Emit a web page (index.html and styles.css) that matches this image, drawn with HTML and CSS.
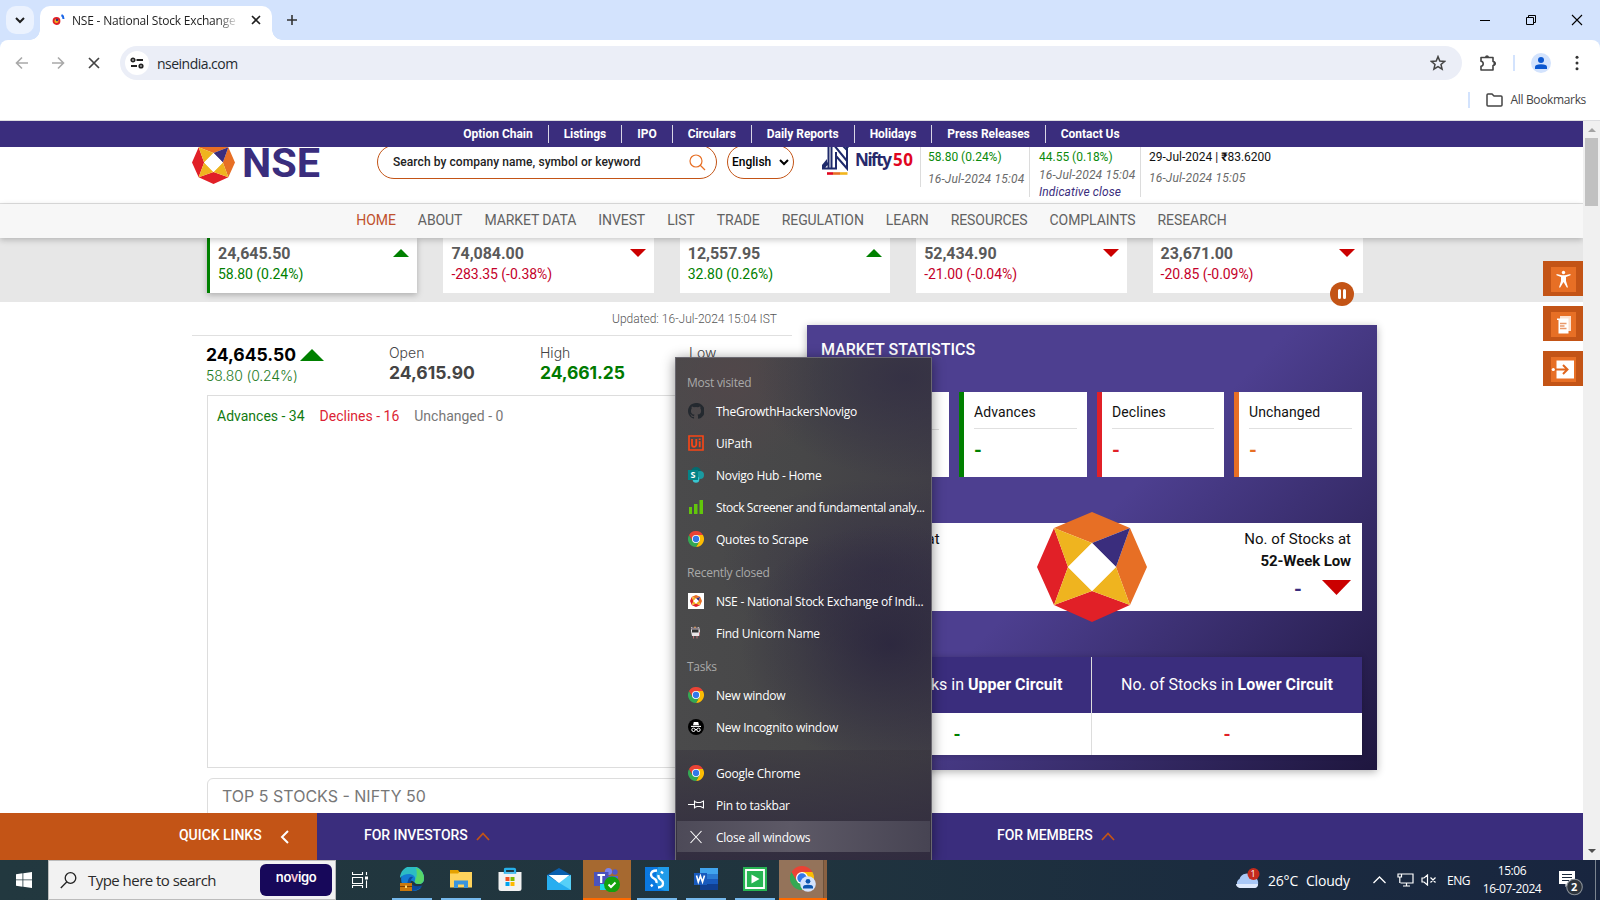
FILE: index.html
```html
<!DOCTYPE html>
<html lang="en">
<head>
<meta charset="utf-8">
<title>NSE - National Stock Exchange</title>
<link rel="stylesheet" href="styles.css">
</head>
<body>
<svg class="defs" width="0" height="0" aria-hidden="true">
  <symbol id="nse" viewBox="-55 -55 110 110">
    <path fill="#e76f25" d="M-38-39 0-55 38-39 0-24ZM38-39 55 0 38 38 24 0Z"/>
    <path fill="#e12027" d="M-38-39-55 0-38 38-24 0ZM-38 38 0 55 38 38 0 24Z"/>
    <path fill="#efb41f" d="M-38-39 0-24-24 0ZM-38 38-24 0 0 24ZM38 38 24 0 0 24Z"/>
    <path fill="#3a2d7d" d="M38-39 24 0 0-24Z"/>
    <path fill="#fff" d="M0-24 24 0 0 24-24 0Z"/>
  </symbol>
  <symbol id="chrome" viewBox="0 0 48 48">
    <path fill="#ea4335" d="M24 24 3.2 12A24 24 0 0 1 44.8 12Z"/>
    <path fill="#fbbc04" d="M24 12H44.8A24 24 0 0 1 24 48L34.4 30Z"/>
    <path fill="#34a853" d="M3.2 12A24 24 0 0 0 24 48L34.4 30 13.6 30Z"/>
    <path fill="#ea4335" d="M3.2 12 13.6 30 24 12Z"/>
    <circle cx="24" cy="24" r="12" fill="#fff"/><circle cx="24" cy="24" r="9.5" fill="#3278ea"/>
  </symbol>
  <symbol id="up" viewBox="0 0 20 10"><path d="M10 0 20 10H0Z" fill="currentColor"/></symbol>
  <symbol id="down" viewBox="0 0 20 10"><path d="M0 0H20L10 10Z" fill="currentColor"/></symbol>
  <symbol id="caret" viewBox="0 0 14 9"><path d="M1 8 7 1.5 13 8" fill="none" stroke="currentColor" stroke-width="1.8"/></symbol>
</svg>

<div class="desktop">
  <div class="browser">
    <div class="tabstrip">
      <div class="tab-search"><svg width="10" height="7" viewBox="0 0 10 7"><path d="M1 1 5 5 9 1" fill="none" stroke="#1f1f1f" stroke-width="2"/></svg></div>
      <div class="tab">
        <svg class="favicon" width="13" height="12" viewBox="0 0 13 12"><circle cx="4.5" cy="7" r="3" fill="#efb41f" stroke="#e12027" stroke-width="1.8"/><circle cx="5" cy="6" r="1.2" fill="#3a2d7d"/><path d="M9.5 1q2 1 2 4" fill="none" stroke="#1a66e8" stroke-width="2"/></svg>
        <span class="tab-title">NSE - National Stock Exchange of</span>
        <svg width="10" height="10" viewBox="0 0 10 10"><path d="M1 1 9 9M9 1 1 9" stroke="#1f1f1f" stroke-width="1.6"/></svg>
      </div>
      <svg class="new-tab" width="12" height="12" viewBox="0 0 12 12"><path d="M6 1V11M1 6H11" stroke="#333" stroke-width="1.6"/></svg>
      <div class="controls">
        <svg width="12" height="12" viewBox="0 0 12 12"><path d="M1 6.5H11" stroke="#000"/></svg>
        <svg width="12" height="12" viewBox="0 0 12 12"><path d="M1.5 3.5H8.5V10.5H1.5ZM3.5 3.5V1.5H10.5V8.5H8.5" fill="none" stroke="#000"/></svg>
        <svg width="12" height="12" viewBox="0 0 12 12"><path d="M1 1 11 11M11 1 1 11" stroke="#000" stroke-width="1.1"/></svg>
      </div>
    </div>
    <div class="toolbar">
      <div class="nav-buttons">
        <svg width="14" height="14" viewBox="0 0 14 14"><path d="M13 7H2M7 1.5 1.5 7 7 12.5" fill="none" stroke="#a9a9a9" stroke-width="1.6"/></svg>
        <svg width="14" height="14" viewBox="0 0 14 14"><path d="M1 7H12M7 1.5 12.5 7 7 12.5" fill="none" stroke="#a9a9a9" stroke-width="1.6"/></svg>
        <svg width="14" height="14" viewBox="0 0 14 14"><path d="M2 2 12 12M12 2 2 12" stroke="#444" stroke-width="1.7"/></svg>
      </div>
      <div class="omnibox">
        <div class="site-chip"><svg width="14" height="12" viewBox="0 0 14 12" fill="none" stroke="#222" stroke-width="1.8"><circle cx="3" cy="3" r="1.7"/><path d="M6.5 3H13M1 9H7"/><circle cx="11" cy="9" r="1.7"/></svg></div>
        <span class="url">nseindia.com</span>
        <svg width="16" height="16" viewBox="0 0 16 16"><path d="M8 1.6 9.8 6 14.6 6.4 11 9.5 12.1 14.2 8 11.7 3.9 14.2 5 9.5 1.4 6.4 6.2 6Z" fill="none" stroke="#444" stroke-width="1.5"/></svg>
      </div>
      <svg class="ext" width="18" height="18" viewBox="0 0 18 18"><path d="M2 3.500H14V7.500Q16 7.600 16 9.500T14 11.500V16H2V12.300Q4.200 12 4.200 9.800T2 7.300Z" fill="none" stroke="#444" stroke-width="1.600" stroke-linejoin="round"/><path d="M6 3Q6.200 1.200 8 1.200T10 3ZM14.500 7.500Q17 8 17 9.500T14.500 11.500Z" fill="#444"/></svg>
      <i class="vbar"></i>
      <svg class="avatar" width="20" height="20" viewBox="0 0 20 20"><circle cx="10" cy="10" r="10" fill="#d3e3fd"/><circle cx="10" cy="7" r="3" fill="#0b57d0"/><path d="M4 16V14Q4 11.3 10 11.3T16 14V16Z" fill="#0b57d0"/></svg>
      <svg width="4" height="16" viewBox="0 0 4 16" fill="#333"><circle cx="2" cy="2.2" r="1.5"/><circle cx="2" cy="8" r="1.5"/><circle cx="2" cy="13.8" r="1.5"/></svg>
    </div>
    <div class="bookmarks">
      <i class="vbar"></i>
      <svg width="17" height="14" viewBox="0 0 17 14"><path d="M1 2Q1 1 2 1H6L8 3H15Q16 3 16 4V12Q16 13 15 13H2Q1 13 1 12Z" fill="none" stroke="#444" stroke-width="1.5"/></svg>
      <span>All Bookmarks</span>
    </div>

    <div class="viewport">
      <div class="page">
        <nav class="topbar">
          <a>Option Chain</a><a>Listings</a><a>IPO</a><a>Circulars</a><a>Daily Reports</a><a>Holidays</a><a>Press Releases</a><a>Contact Us</a>
        </nav>
        <header class="header">
          <svg class="brand" width="132" height="43" viewBox="0 0 132 43"><use href="#nse" width="43" height="43"/><text x="50" y="36" textLength="78" lengthAdjust="spacingAndGlyphs" class="brand-text">NSE</text></svg>
          <div class="search"><span>Search by company name, symbol or keyword</span><svg width="17" height="17" viewBox="0 0 17 17" fill="none" stroke="#e76f25" stroke-width="1.2"><circle cx="7" cy="7" r="6"/><path d="M11 11 16 16"/></svg></div>
          <div class="lang"><span>English</span><svg width="10" height="7" viewBox="0 0 10 7"><path d="M1 1 5 5 9 1" fill="none" stroke="#000" stroke-width="2"/></svg></div>
          <svg class="nifty" width="92" height="42" viewBox="0 0 92 42"><g fill="none" stroke="#1f2a6b" stroke-width="2"><path d="M6.500 34.500V8M6.500 34.500H1L6 29M9.500 34.500V8L25 27M5 34.500H14V22L25 34.500V11M14 18V22M29 9 24 15 18 9"/></g><path d="M0 35V31L5 25V30Z" fill="#1f2a6b"/><path d="M5 39.500H11" stroke="#e0061f" stroke-width="2.600"/><path d="M11 39.500H18" stroke="#e76f25" stroke-width="2.600"/><path d="M18 39.500H25.500" stroke="#f2b51c" stroke-width="2.600"/><text x="33" y="32" textLength="37" class="nifty-a">Nifty</text><text x="71" y="32" textLength="20" class="nifty-b">50</text></svg>
          <div class="quote q1"><b class="up">58.80 (0.24%)</b><i>16-Jul-2024 15:04</i></div>
          <div class="quote q2"><b class="up">44.55 (0.18%)</b><i>16-Jul-2024 15:04</i><i class="ind">Indicative close</i></div>
          <div class="quote q3"><b>29-Jul-2024 | <span class="rs">₹</span>83.6200</b><i>16-Jul-2024 15:05</i></div>
        </header>
        <nav class="mainnav">
          <a class="on">HOME</a><a>ABOUT</a><a>MARKET DATA</a><a>INVEST</a><a>LIST</a><a>TRADE</a><a>REGULATION</a><a>LEARN</a><a>RESOURCES</a><a>COMPLAINTS</a><a>RESEARCH</a>
        </nav>
        <section class="tickers">
          <div class="tick up active"><div><b>24,645.50</b><svg width="16" height="8"><use href="#up"/></svg></div><span>58.80 (0.24%)</span></div>
          <div class="tick down"><div><b>74,084.00</b><svg width="16" height="8"><use href="#down"/></svg></div><span>-283.35 (-0.38%)</span></div>
          <div class="tick up"><div><b>12,557.95</b><svg width="16" height="8"><use href="#up"/></svg></div><span>32.80 (0.26%)</span></div>
          <div class="tick down"><div><b>52,434.90</b><svg width="16" height="8"><use href="#down"/></svg></div><span>-21.00 (-0.04%)</span></div>
          <div class="tick down"><div><b>23,671.00</b><svg width="16" height="8"><use href="#down"/></svg></div><span>-20.85 (-0.09%)</span></div>
          <svg class="pause" width="24" height="24" viewBox="0 0 24 24"><circle cx="12" cy="12" r="12" fill="#c35416"/><path d="M9.5 8.500V15.500M14.500 8.500V15.500" stroke="#fff" stroke-width="3" stroke-linecap="round"/></svg>
        </section>
        <main class="content">
          <section class="left">
            <p class="updated">Updated: 16-Jul-2024 15:04 IST</p>
            <div class="summary">
              <div class="s1"><strong>24,645.50 <svg width="24" height="12"><use href="#up"/></svg></strong><span>58.80 (0.24%)</span></div>
              <div class="s2"><span>Open</span><strong>24,615.90</strong></div>
              <div class="s3"><span>High</span><strong>24,661.25</strong></div>
              <div class="s4"><span>Low</span></div>
            </div>
            <div class="chart"><span class="adv">Advances - 34</span><span class="dec">Declines - 16</span><span class="unc">Unchanged - 0</span></div>
            <div class="top5">TOP 5 STOCKS - NIFTY 50</div>
          </section>
          <section class="stats">
            <h2>MARKET STATISTICS</h2>
            <div class="boxes">
              <div class="box traded"></div>
              <div class="box green"><span>Advances</span><b>-</b></div>
              <div class="box red"><span>Declines</span><b>-</b></div>
              <div class="box orange"><span>Unchanged</span><b>-</b></div>
            </div>
            <div class="weeks">
              <div class="wk">No. of Stocks at</div>
              <svg class="octagon" width="110" height="110"><use href="#nse"/></svg>
              <div class="wk low">No. of Stocks at<br><b>52-Week Low</b><div class="wk-val"><em>-</em><svg width="29" height="15" viewBox="0 0 29 15"><path d="M0 0H29L14.5 15Z" fill="#cb0000"/></svg></div></div>
            </div>
            <div class="circuit">
              <div><h3>No. of Stocks in <b>Upper Circuit</b></h3><p class="g">-</p></div>
              <div><h3>No. of Stocks in <b>Lower Circuit</b></h3><p class="r">-</p></div>
            </div>
          </section>
        </main>
        <footer class="quick">
          <div class="ql">QUICK LINKS <svg width="9" height="14" viewBox="0 0 9 14"><path d="M8 1 2 7 8 13" fill="none" stroke="#fff" stroke-width="2"/></svg></div>
          <div class="fi">FOR INVESTORS <svg width="14" height="9"><use href="#caret"/></svg></div>
          <div class="fm">FOR MEMBERS <svg width="14" height="9"><use href="#caret"/></svg></div>
        </footer>
        <div class="side">
          <div><svg width="25" height="25" viewBox="0 0 25 25" fill="#fff"><circle cx="12.5" cy="5.5" r="1.7"/><path d="M5.5 7 11 8.3H14L19.5 7 19.5 8.3 15 10V14L17 20.5H15.8L12.5 15 9.2 20.5H8L10 14V10L5.5 8.3Z"/></svg></div>
          <div><svg width="25" height="25" viewBox="0 0 25 25"><path d="M9 4H20V19H9Z" fill="#fbe0cf"/><path d="M6 6.500H17.5V21.5H7.5V8H6Z" fill="#fff"/><path d="M9 11.500H15.500M9 14H13.500M9 16.500H15.500" stroke="#e9986a" stroke-width="1.3"/></svg></div>
          <div><svg width="25" height="25" viewBox="0 0 25 25"><path d="M5.500 3.500H23V21.500H5.500Z" fill="#fff"/><path d="M3 12.500H16M12 8 16.500 12.500 12 17" fill="none" stroke="#e0661d" stroke-width="2"/><circle cx="2.300" cy="12.500" r="1.600" fill="#fff"/></svg></div>
        </div>
      </div>
      <div class="scrollbar"><svg width="8" height="4"><path d="M0 4 4 0 8 4Z" fill="#a3a3a3"/></svg><i></i><svg class="sd" width="8" height="4"><path d="M0 0H8L4 4Z" fill="#505050"/></svg></div>
    </div>
  </div>

  <div class="jumplist">
    <h4>Most visited</h4>
    <div class="jl"><svg width="16" height="16" viewBox="0 0 16 16"><path fill="#24292f" d="M8 0C3.58 0 0 3.580 0 8c0 3.540 2.290 6.530 5.470 7.590.4.070.550-.170.550-.380v-1.340C3.800 14.350 3.330 12.930 3.330 12.930c-.36-.92-.89-1.170-.89-1.170-.73-.5.060-.49.060-.49.800.060 1.230.830 1.230.830.710 1.220 1.870.870 2.330.660.070-.52.280-.87.510-1.070-1.780-.2-3.640-.89-3.640-3.950 0-.87.310-1.590.820-2.150-.080-.2-.36-1.020.080-2.120 0 0 .67-.21 2.200.820a7.500 7.500 0 0 1 4 0c1.530-1.040 2.200-.82 2.200-.82.440 1.100.160 1.920.080 2.120.510.560.820 1.270.820 2.150 0 3.070-1.870 3.750-3.650 3.950.290.250.540.730.540 1.480v2.190c0 .21.150.460.550.380A8 8 0 0 0 8 0Z"/></svg>TheGrowthHackersNovigo</div>
    <div class="jl"><svg width="16" height="16" viewBox="0 0 16 16"><path d="M1 1H15V15H1Z" fill="none" stroke="#fa4616" stroke-width="1.600"/><path d="M4 4V9.500Q4 11.800 6 11.800T8.300 9.500V4M11.700 6.300V12.200M11.700 3.500V5" fill="none" stroke="#fa4616" stroke-width="1.800"/></svg>UiPath</div>
    <div class="jl"><svg width="16" height="16" viewBox="0 0 16 16"><circle cx="8" cy="5" r="5" fill="#036c70"/><circle cx="12" cy="8" r="4" fill="#1a9ba1"/><circle cx="8" cy="12.500" r="3.300" fill="#37c6d0"/><path d="M0 3H10V13H0Z" fill="#038387"/><text x="2.400" y="11.300" class="ico-s">S</text></svg>Novigo Hub - Home</div>
    <div class="jl tight"><svg width="16" height="16" viewBox="0 0 16 16" fill="#62c60b"><path d="M1 8H4V15H1ZM6 5H9.500V15H6ZM11.500 1H15V15H11.500Z"/></svg>Stock Screener and fundamental analy...</div>
    <div class="jl"><svg width="16" height="16"><use href="#chrome"/></svg>Quotes to Scrape</div>
    <h4>Recently closed</h4>
    <div class="jl"><svg width="16" height="16"><path d="M0 0H16V16H0Z" fill="#fff"/><use href="#nse" x="2" y="2" width="12" height="12"/></svg>NSE - National Stock Exchange of Indi...</div>
    <div class="jl"><svg width="16" height="16" viewBox="0 0 16 16"><path d="M3 2 5 3H9L11 2 12 6 11 11H4L3 6Z" fill="#e8e4e6"/><path d="M3 3 4.500 2.500H10L11 3.500V4.500H3Z" fill="#8b7f88"/><path d="M4 4.500H10.500V7.500H4Z" fill="#333"/><path d="M7 1 8 3H6Z" fill="#e9a35c"/><path d="M5.500 11V13.500M9 11V13.500M11.500 7.500V10.500" stroke="#c06a70"/></svg>Find Unicorn Name</div>
    <h4>Tasks</h4>
    <div class="jl"><svg width="16" height="16"><use href="#chrome"/></svg>New window</div>
    <div class="jl"><svg width="16" height="16" viewBox="0 0 16 16"><circle cx="8" cy="8" r="8" fill="#000"/><path d="M5.800 3H10.200L11 6.300H5Z" fill="#fff"/><path d="M3 7.400H13" stroke="#fff" stroke-width="1.100"/><g fill="none" stroke="#fff"><circle cx="5.500" cy="10.800" r="1.700"/><circle cx="10.500" cy="10.800" r="1.700"/><path d="M7 10.500H9"/></g></svg>New Incognito window</div>
    <div class="jl-foot">
      <div class="jl"><svg width="16" height="16"><use href="#chrome"/></svg>Google Chrome</div>
      <div class="jl"><svg width="16" height="16" viewBox="0 0 16 16"><path d="M0 7.500H6.500M6.500 3.500V11.500M6.500 4.500 9 5.500H12.500L15.500 4V11L12.500 9.500H9L6.500 10.500" fill="none" stroke="#fff" stroke-width="1.100"/></svg>Pin to taskbar</div>
      <div class="jl hover"><svg width="16" height="16" viewBox="0 0 16 16"><path d="M2.500 2 13.500 14M13.500 2 2.500 14" stroke="#fff" stroke-width="1.100"/></svg>Close all windows</div>
    </div>
  </div>

  <div class="taskbar">
    <div class="start"><svg width="16" height="16" viewBox="0 0 16 16" fill="#fff"><path d="M0 2.200 6.500 1.300V7.500H0ZM7.300 1.200 16 0V7.500H7.300ZM0 8.300H6.500V14.700L0 13.800ZM7.300 8.300H16V16L7.300 14.800Z"/></svg></div>
    <div class="tsearch"><svg width="17" height="17" viewBox="0 0 17 17" fill="none" stroke="#222" stroke-width="1.300"><circle cx="10.500" cy="6" r="5.300"/><path d="M6.700 10 .800 16"/></svg><span>Type here to search</span><div class="novigo">no<em>v</em>igo</div></div>
    <div class="apps">
      <div class="app plain"><svg width="16" height="16" viewBox="0 0 16 16" fill="none" stroke="#fff" stroke-width="1.100"><path d="M.500 0V2.500H10.500V0M.500 5.500H10.500V11.500H.500ZM.500 16V13.500H10.500V16M14.500 0V3M14.500 8.500V16"/><path d="M13 6H16" stroke-width="3"/></svg></div>
      <div class="app run"><svg width="24" height="24" viewBox="0 0 24 24"><path d="M12 0A12 12 0 0 1 24 11Q24 17 18.500 17 15 17 14 15 10 12 10 16 12 21 20 20.500L21.500 20.500A12 12 0 1 1 12 0Z" fill="#137bd3"/><path d="M0 11A12 12 0 0 1 24 11Q24 17 18.500 17 13.500 16.500 15 13.500 16 8 10 7 3 6.800 0 11Z" fill="#2cbcc4"/><path d="M16 .700A12 12 0 0 1 24 11Q24 17 18.500 17 13.500 16.500 15 13.500 18 8 16 .700Z" fill="#58d668"/><path d="M8.500 12Q5 20 12 23.900 19 23.500 22.500 18.500 14 21 11 16 9.500 13.500 13 10 10 9 8.500 12Z" fill="#0c4a9c"/><path d="M0 16H12V24H0Z" fill="#c9770c"/><path d="M0 19.500H12" stroke="#7a3c00"/><path d="M5 18.500H7V21H5Z" fill="#ffd76a"/></svg></div>
      <div class="app run"><svg width="24" height="24" viewBox="0 0 24 24"><path d="M1 3H9L10.500 5H22V20H1Z" fill="#e5a100"/><path d="M1 6.500H9L10.500 5H23V20.500H1Z" fill="#ffd35c"/><path d="M5 21V13.500H19V21H15V17.500H9V21Z" fill="#3a94dc"/></svg></div>
      <div class="app"><svg width="24" height="24" viewBox="0 0 24 24"><path d="M7 7V2.500Q7 1.800 8 1.800H16Q17 1.800 17 2.500V7" fill="none" stroke="#26b0ea" stroke-width="2.200"/><path d="M.500 5H23.500V21.500Q23.500 24 21 24H3Q.500 24 .500 21.500Z" fill="#f2f2f2"/><path d="M6.500 5V6H17.500V5" fill="none" stroke="#26b0ea" stroke-width="1.500"/><path d="M7.500 10H11.500V14H7.500Z" fill="#f25022"/><path d="M12.500 10H16.500V14H12.500Z" fill="#7fba00"/><path d="M7.500 15H11.500V19H7.500Z" fill="#00a4ef"/><path d="M12.500 15H16.500V19H12.500Z" fill="#ffb900"/></svg></div>
      <div class="app"><svg width="24" height="24" viewBox="0 0 24 24"><path d="M0 8 12 1 24 8V16H0Z" fill="#0a5fae"/><path d="M0 8 12 16 24 8V23H0Z" fill="#27aef0"/><path d="M24 8V23L9 14Z" fill="#56d0f8"/><path d="M1.500 8H22.500L12 16Z" fill="#fff"/></svg></div>
      <div class="app teams"><svg width="26" height="25" viewBox="0 0 26 25"><circle cx="14.500" cy="4.500" r="3.600" fill="#7b83eb"/><circle cx="21" cy="5" r="2.700" fill="#5059c9"/><path d="M11 9H24V16H11Z" fill="#5b62d0"/><path d="M0 5H14.500V19H0Z" fill="#4b53bc"/><path d="M3.500 8H11M7.200 8V16" stroke="#fff" stroke-width="2.200"/><path d="M6 17H13V23H6Z" fill="#20d8e8"/><circle cx="18" cy="17.500" r="8" fill="#13a10e"/><path d="M14.500 17.500 17 20 21.500 15.500" fill="none" stroke="#fff" stroke-width="2"/></svg></div>
      <div class="app run"><svg width="24" height="24" viewBox="0 0 24 24"><path d="M0 0H24V24H0Z" fill="#0a78e0"/><path d="M13 0H24V24Q5 24 13 0Z" fill="#1f9be9"/><path d="M12 3.500Q6 3.500 6 7.500 6 10 9 11.500T11.500 16M6 17.500 7.500 19.500M13 20.500Q18 20 18 16.500 18 14 15.500 12.500T13.500 8M16 4.500 18 6.500" fill="none" stroke="#fff" stroke-width="2.300"/></svg></div>
      <div class="app run"><svg width="24" height="24" viewBox="0 0 24 24"><path d="M6 1H24V7H6Z" fill="#41a5ee"/><path d="M6 7H24V12H6Z" fill="#2b7cd3"/><path d="M6 12H24V17H6Z" fill="#185abd"/><path d="M6 17H24V23H6Z" fill="#103f91"/><path d="M0 6H13V18H0Z" fill="#185abd"/><path d="M2.500 8.500 4.300 15 6.400 9 8.500 15 10.500 8.500" fill="none" stroke="#fff" stroke-width="1.600"/></svg></div>
      <div class="app run"><svg width="24" height="24" viewBox="0 0 24 24"><path d="M0 0H24V24H0Z" fill="#27b553"/><path d="M3 3H21V21H3Z" fill="none" stroke="#fff" stroke-width="1.800"/><path d="M8.500 7.500 16.500 12 8.500 16.500Z" fill="#fff"/></svg></div>
      <div class="app chrome"><svg width="26" height="26" viewBox="0 0 26 26"><use href="#chrome" width="24" height="24"/><circle cx="18" cy="18" r="7.800" fill="#d3e3fd"/><circle cx="18" cy="15.300" r="2.400" fill="#0b57b0"/><path d="M13 22.500V21Q13 18.800 18 18.800T23 21V22.500Z" fill="#0b57b0"/></svg></div>
    </div>
    <div class="tray">
      <div class="cloud"><svg width="26" height="24" viewBox="0 0 26 24"><path d="M5 20A5 5 0 0 1 4.500 11 7.500 7.500 0 0 1 18 9 5.700 5.700 0 0 1 19.500 20Z" fill="#a9c7f5"/><path d="M5 20Q1 19 1 16H23Q23 20 19.500 20Z" fill="#dfeafd"/><circle cx="18.500" cy="6" r="6" fill="#c42b1c"/></svg><span>1</span></div>
      <span class="temp">26°C</span><span class="cond">Cloudy</span>
      <svg class="t-up" width="13" height="8" viewBox="0 0 13 8"><path d="M.500 7 6.500 1 12.500 7" fill="none" stroke="#fff" stroke-width="1.300"/></svg>
      <svg class="t-net" width="17" height="14" viewBox="0 0 17 14" fill="none" stroke="#fff" stroke-width="1.200"><path d="M5 1H16V10H3.500M9.500 10V13M6 13H13M1 1H4.500V4H1ZM2.800 4V10"/></svg>
      <svg class="t-vol" width="16" height="12" viewBox="0 0 16 12" fill="none" stroke="#fff" stroke-width="1.200"><path d="M1 4H3L6.500 1V11L3 8H1ZM9.500 3.500 14.500 8.500M14.500 3.500 9.500 8.500"/></svg>
      <span class="lng">ENG</span>
      <div class="clock"><span>15:06</span><span>16-07-2024</span></div>
      <div class="notif"><svg width="24" height="26" viewBox="0 0 24 26"><path d="M0 1H16V14H10L6.500 17V14H0Z" fill="#fff"/><path d="M3 4.500H13M3 7.500H13M3 10.500H10" stroke="#1a2a3c" stroke-width="1.100"/><circle cx="15.500" cy="17" r="7.800" fill="#2c333b" stroke="#8a9097" stroke-width="1.100"/></svg><span>2</span></div>
    </div>
  </div>
</div>
</body>
</html>
```

FILE: styles.css
```css
* { box-sizing: border-box; }
body { margin: 0; width: 1600px; height: 900px; overflow: hidden; font-family: Roboto, "Liberation Sans", sans-serif; }
p, h2, h3, h4 { margin: 0; }
svg { display: block; flex: none; }
.defs { position: absolute; }
.desktop { position: relative; display: flex; flex-direction: column; height: 900px; }
.browser { height: 860px; display: flex; flex-direction: column; background: #d3e3fd; font-family: "Open Sans", "Noto Sans", sans-serif; }

.tabstrip { height: 40px; flex: none; display: flex; align-items: flex-end; padding-left: 6px; position: relative; }
.tab-search { width: 28px; height: 28px; margin: 0 6px 6px 0; border-radius: 10px; background: #ebf2fe; display: grid; place-items: center; }
.tab { position: relative; width: 232px; height: 34px; padding: 0 11px 6px 12px; display: flex; align-items: center; background: #fff; border-radius: 10px 10px 0 0; }
.tab::before, .tab::after { content: ""; position: absolute; bottom: 0; width: 10px; height: 10px; }
.tab::before { left: -10px; background: radial-gradient(circle at 0 0, transparent 9.5px, #fff 10px); }
.tab::after { right: -10px; background: radial-gradient(circle at 100% 0, transparent 9.5px, #fff 10px); }
.tab-title { width: 165px; margin: 0 14px 0 7px; overflow: hidden; white-space: nowrap; font-size: 12px; letter-spacing: -.2px; color: #1f1f1f; -webkit-mask-image: linear-gradient(90deg, #000 145px, transparent 167px); mask-image: linear-gradient(90deg, #000 145px, transparent 167px); }
.new-tab { margin: 0 0 14px 14px; }
.controls { margin-left: auto; padding: 0 17px 14px 0; display: flex; gap: 34px; }

.toolbar { height: 40px; flex: none; display: flex; align-items: center; padding: 6px 21px 0 15px; background: #fff; border-radius: 8px 8px 0 0; }
.nav-buttons { width: 105px; display: flex; gap: 22px; }
.omnibox { flex: none; width: 1342px; height: 34px; border-radius: 17px; background: #ebeef7; display: flex; align-items: center; padding: 0 16px 0 5px; }
.site-chip { width: 24px; height: 24px; border-radius: 50%; background: #fff; display: grid; place-items: center; }
.url { flex: 1; margin: 1px 0 0 8px; font-size: 14px; line-height: 20px; letter-spacing: -.52px; color: #1f2a30; }
.ext { margin: 0 16px 0 17px; }
.vbar { flex: none; width: 2px; height: 16px; background: #d3e3fd; }
.avatar { margin: 0 24px 0 16px; }
.bookmarks { height: 41px; flex: none; background: #fff; border-bottom: 1px solid #dcdde0; display: flex; align-items: center; justify-content: flex-end; gap: 8px; padding-right: 14px; font-size: 12px; letter-spacing: -.35px; color: #444; }
.bookmarks .vbar { margin-right: 8px; }
.bookmarks span { margin-top: -1px; }

.viewport { flex: 1; min-height: 0; display: flex; background: #fff; font-family: Roboto, sans-serif; }
.page { position: relative; width: 1583px; display: flex; flex-direction: column; overflow: hidden; }
.scrollbar { width: 17px; background: #f0f0f0; display: flex; flex-direction: column; align-items: center; padding: 7px 0; }
.scrollbar i { width: 13px; height: 68px; margin-top: 6px; background: #c1c1c1; }
.sd { margin-top: auto; }

.topbar { position: relative; z-index: 2; flex: none; height: 26px; background: #3a2d7d; display: flex; justify-content: center; align-items: center; }
.topbar a { padding: 0 15px; line-height: 18px; color: #fff; font-size: 12px; font-weight: 700; letter-spacing: -.03px; border-right: 1px solid #d8d5e5; }
.topbar a:last-child { border: 0; }

.header { flex: none; height: 57px; overflow: visible; display: flex; align-items: flex-start; padding-left: 192px; border-bottom: 1px solid #e0e0e0; }
.brand { margin-top: -6px; }
.brand-text { font: 700 41px Roboto, sans-serif; fill: #3a2d7d; }
.search { margin: -2px 0 0 53px; width: 340px; height: 34px; padding: 0 10px 0 15px; display: flex; justify-content: space-between; align-items: center; border: 1px solid #c35416; border-radius: 17px; font-size: 12px; font-weight: 500; color: #222; letter-spacing: .07px; }
.lang { margin: -2px 0 0 10px; width: 67px; height: 34px; padding: 0 4px; display: flex; justify-content: space-between; align-items: center; border: 1px solid #c35416; border-radius: 17px; font-size: 12px; font-weight: 500; color: #000; }
.nifty { margin: -13px 0 0 28px; }
.nifty-a { font: 700 17px "Noto Sans", sans-serif; fill: #27296b; }
.nifty-b { font: 700 17px "Noto Sans", sans-serif; fill: #e0061f; }
.quote { display: flex; flex-direction: column; border-left: 1px solid #dcdcdc; padding-left: 7px; font-size: 12px; white-space: nowrap; color: #111; }
.quote b { font-weight: 400; line-height: 20px; }
.quote i { color: #6a6a6a; line-height: 18px; letter-spacing: .18px; }
.quote .ind { color: #3a2d7d; line-height: 17px; letter-spacing: .1px; }
.rs { font-weight: 700; }
.q1 { width: 109px; height: 40px; margin-left: 6px; }
.q1 i { margin-top: 3px; }
.q2 { width: 111px; height: 50px; padding-left: 9px; }
.q2 i { margin-top: -1px; }
.q2 .ind { margin-top: 0; }
.q3 { height: 50px; padding-left: 8px; }
.q3 i { margin-top: 2px; }
.up { color: #0a8a0a; }

.mainnav { position: relative; z-index: 2; flex: none; height: 34px; background: #f7f7f7; display: flex; justify-content: center; align-items: center; gap: 22px; box-shadow: 0 2px 6px rgba(0,0,0,.22); font-size: 14px; line-height: 32px; letter-spacing: -.08px; color: #626262; }
.mainnav a { margin-top: -2px; }
.mainnav .on { color: #c0512c; }

.tickers { position: relative; z-index: 1; flex: none; height: 64px; background: #e7e7e7; padding: 0 220px 9px 207px; display: grid; grid-template-columns: repeat(5, 1fr); gap: 26px; }
.tick { min-width: 0; background: #fff; padding: 5px 8px 0 8px; }
.tick.active { border-left: 3px solid #008000; box-shadow: 0 2px 6px rgba(0,0,0,.25); }
.tick div { display: flex; justify-content: space-between; align-items: center; line-height: 21px; }
.tick div svg { margin-top: -1px; }
.tick b { font-size: 16px; font-weight: 700; color: #5a5a5a; letter-spacing: -.05px; }
.tick span { display: block; font-size: 14px; line-height: 20px; letter-spacing: -.05px; }
.tick.up, .tick.up svg { color: #008000; }
.tick.down, .tick.down svg { color: #cb0000; }
.tick.down span { color: #c4002a; }
.pause { position: absolute; left: 1330px; top: 44px; }

.content { flex: 1; min-height: 0; display: flex; padding-left: 192px; }
.left { width: 600px; padding-left: 15px; font-family: Inter, sans-serif; }
.updated { margin-left: -15px; height: 34px; padding-right: 15px; border-bottom: 1px solid #e0e0e0; text-align: right; font: 300 12px/34px Roboto, sans-serif; color: #555; }
.summary { height: 59px; display: flex; padding-top: 8px; color: #444; font-size: 14px; }
.summary div { display: flex; flex-direction: column; }
.summary span { font-weight: 300; font-size: 14px; line-height: 18px; }
.summary strong { font-size: 17.5px; font-weight: 700; line-height: 22px; display: flex; gap: 3px; align-items: center; }
.s1 { width: 182px; margin-left: -1px; }
.s1 strong { color: #000; }
.summary .s1 span { color: #1d7a1d; margin-top: 1px; letter-spacing: -.15px; }
.s2 { width: 151px; margin-left: 1px; }
.s3 { width: 149px; }
.s3 strong { color: #007a00; letter-spacing: -.1px; }
.s1 svg { color: #008000; margin-left: 1px; }
.chart { width: 570px; height: 373px; border: 1px solid #ddd; padding: 10px 9px; display: flex; gap: 15px; font: 400 14px/21px Roboto, sans-serif; }
.adv { color: #117a11; }
.dec { color: #dc1f35; }
.unc { color: #777; }
.top5 { margin-top: 10px; width: 570px; height: 60px; border: 1px solid #ddd; border-radius: 6px; padding: 6px 14px; font-size: 16px; line-height: 22px; color: #777; }

.stats { margin-left: 15px; margin-top: 23px; width: 570px; height: 445px; padding: 0 15px; background: linear-gradient(135deg, #4d3f90 0%, #4d3f90 48%, #1e163e 100%); box-shadow: 0 2px 8px rgba(0,0,0,.3); }
.stats h2 { height: 67px; margin-left: -1px; line-height: 49px; font-size: 16px; font-weight: 500; color: #fff; letter-spacing: 0; }
.boxes { display: grid; grid-template-columns: 127px 128px 127px 128px; gap: 10px; }
.box { height: 85px; background: #fff; border-left: 5px solid #3a2d7d; padding: 9px 10px; font-size: 14px; line-height: 22px; }
.box.traded::before { content: ""; display: block; height: 28px; border-bottom: 1px solid #e0e0e0; }
.box span { display: block; height: 28px; border-bottom: 1px solid #e0e0e0; color: #111; letter-spacing: .1px; }
.box b { display: block; font-size: 20px; line-height: 42px; color: inherit; }
.green { border-color: #008000; color: #008000; }
.red { border-color: #e12027; color: #e12027; }
.orange { border-color: #e76f25; color: #e76f25; }
.weeks { position: relative; height: 88px; margin-top: 46px; background: #fff; display: flex; justify-content: space-between; padding: 5px 11px; font-size: 15px; line-height: 22px; color: #111; }
.wk b { font-weight: 700; font-size: 15px; letter-spacing: -.1px; }
.low { text-align: right; }
.octagon { position: absolute; left: 215px; top: -11px; }
.wk-val { display: flex; justify-content: flex-end; gap: 20px; align-items: flex-start; padding-top: 8px; }
.wk-val em { font: 700 20px/18px Roboto, sans-serif; color: #3a2d7d; }
.circuit { display: grid; grid-template-columns: 1fr 1fr; margin-top: 46px; text-align: center; background: #fff; box-shadow: 0 0 6px rgba(0,0,0,.2); }
.circuit div + div { border-left: 1px solid #ddd; margin-left: -1px; }
.circuit h3 { height: 56px; line-height: 55px; background: #3a2d7d; color: #fff; font-size: 16px; font-weight: 400; }
.circuit b { font-weight: 700; }
.circuit p { height: 42px; line-height: 43px; font-weight: 700; font-size: 18px; }
.g { color: #008000; }
.r { color: #e12027; }

.quick { position: absolute; left: 0; right: 0; bottom: 0; height: 47px; display: flex; background: #3a2d7d; color: #fff; font-size: 14px; font-weight: 500; line-height: 45px; padding: 0; }
.quick div { display: flex; align-items: center; color: #fff; padding-bottom: 3px; letter-spacing: -.04px; }
.ql { width: 317px; background: #c35416; padding-left: 179px; }
.ql svg { margin-left: 18px; margin-top: 4px; }
.fi { width: 633px; padding-left: 47px; }
.fm { padding-left: 47px; }
.fi svg, .fm svg { margin-left: 8px; margin-top: 3px; color: #c35416; }
.side { position: absolute; z-index: 3; right: 0; top: 140px; display: flex; flex-direction: column; gap: 10px; }
.side div { width: 40px; height: 35px; background: #c35416; padding: 6px 0 0 8px; }
.side svg { background: #e76f25; height: 25px; }

.jumplist { position: absolute; left: 675px; top: 357px; width: 257px; height: 503px; padding: 12px 0 0; border: 1px solid #6a6870; border-bottom: 0; color: #fff; font: 12px "Open Sans", "Noto Sans", sans-serif; letter-spacing: -.25px; box-shadow: 0 2px 12px rgba(0,0,0,.45);
  background: radial-gradient(ellipse 150px 120px at 84% 57%, rgba(42,37,62,.85), rgba(50,45,68,0)), radial-gradient(ellipse 160px 90px at 80% 42%, rgba(52,47,68,.75), rgba(60,55,72,0)), radial-gradient(ellipse 150px 100px at 90% 4%, rgba(52,48,68,.9), rgba(60,55,72,0)), radial-gradient(ellipse 90px 90px at 22% 4%, #51474a, rgba(74,72,72,0)), linear-gradient(90deg, #4a4a4b, #474748 50%, #403e46); }
.jumplist h4 { height: 25px; padding-left: 11px; line-height: 26px; font-weight: 400; color: #a9a9a9; }
.jl { height: 32px; display: flex; align-items: center; gap: 12px; padding-left: 12px; white-space: nowrap; }
.jl.tight { letter-spacing: -.42px; }
.jl + h4 { margin-top: 5px; height: 28px; line-height: 26px; margin-bottom: -3px; }
.jl-foot { margin-top: 7px; height: 113px; padding-top: 7px; background: linear-gradient(180deg, rgba(56,53,62,.5), rgba(46,40,62,.85)); }
.hover { height: 31px; margin: 0 1px; padding: 1px 0 0 11px; background: linear-gradient(90deg, #4d4a58, #5d5966 45%, #474453); }
.ico-s { font: 700 9px "Open Sans", sans-serif; fill: #fff; }

.taskbar { position: relative; height: 40px; display: flex; background: linear-gradient(90deg, #22383f 0%, #20343e 50%, #1b2c3f 75%, #18253f 100%); color: #fff; font-family: "Open Sans", "Noto Sans", sans-serif; }
.start { width: 48px; display: grid; place-items: center; }
.tsearch { width: 288px; background: #f2f2f2; border: 1px solid #bcbcbc; display: flex; align-items: center; padding-left: 11px; color: #2a2a2a; }
.tsearch span { margin-left: 11px; width: 172px; font-size: 15px; letter-spacing: -.53px; }
.novigo { width: 72px; height: 32px; border-radius: 6px; background: #17085a; color: #fff; text-align: center; font: 600 13px/27px Inter, sans-serif; letter-spacing: -.4px; }
.novigo em { font-style: normal; color: #f5c2cf; }
.apps { display: flex; }
.app { width: 49px; display: grid; place-items: center; border-bottom: 2px solid transparent; background-clip: padding-box; }
.app.plain { width: 48px; margin-right: 3px; }
.app.plain svg { margin-top: 1px; }
.app.run { background: linear-gradient(#76b9ed, #76b9ed) center bottom / 40px 2px no-repeat border-box; }
.app.teams { background: #a66930; border-bottom-color: #ff6a00; width: 48px; margin-right: 1px; background-clip: border-box; border-bottom-style: solid; }
.app.chrome { background: linear-gradient(90deg, transparent 44px, #6e523b 44px, #6e523b 45px, #8a6142 45px) #94735a; border-bottom-color: #ff6a00; width: 48px; }
.tray { margin-left: auto; display: flex; align-items: center; font-size: 14px; letter-spacing: -.2px; border-right: 1px solid #7b8490; margin-right: 4px; }
.cloud { position: relative; }
.cloud span { position: absolute; left: 15.500px; top: -1px; font-size: 9px; line-height: 14px; }
.temp { margin-left: 7px; width: 38px; }
.cond { width: 67px; }
.t-net { margin-left: 11px; }
.t-vol { margin-left: 7px; }
.lng { font-size: 12px; width: 35px; margin-left: 10px; letter-spacing: -.5px; }
.clock { display: flex; flex-direction: column; align-items: center; width: 60px; font-size: 12px; line-height: 18px; letter-spacing: -.4px; }
.notif { position: relative; margin: 5px 12px 0 17px; }
.notif span { position: absolute; left: 12px; top: 8px; font-size: 11px; font-weight: 700; line-height: 18px; }
```
